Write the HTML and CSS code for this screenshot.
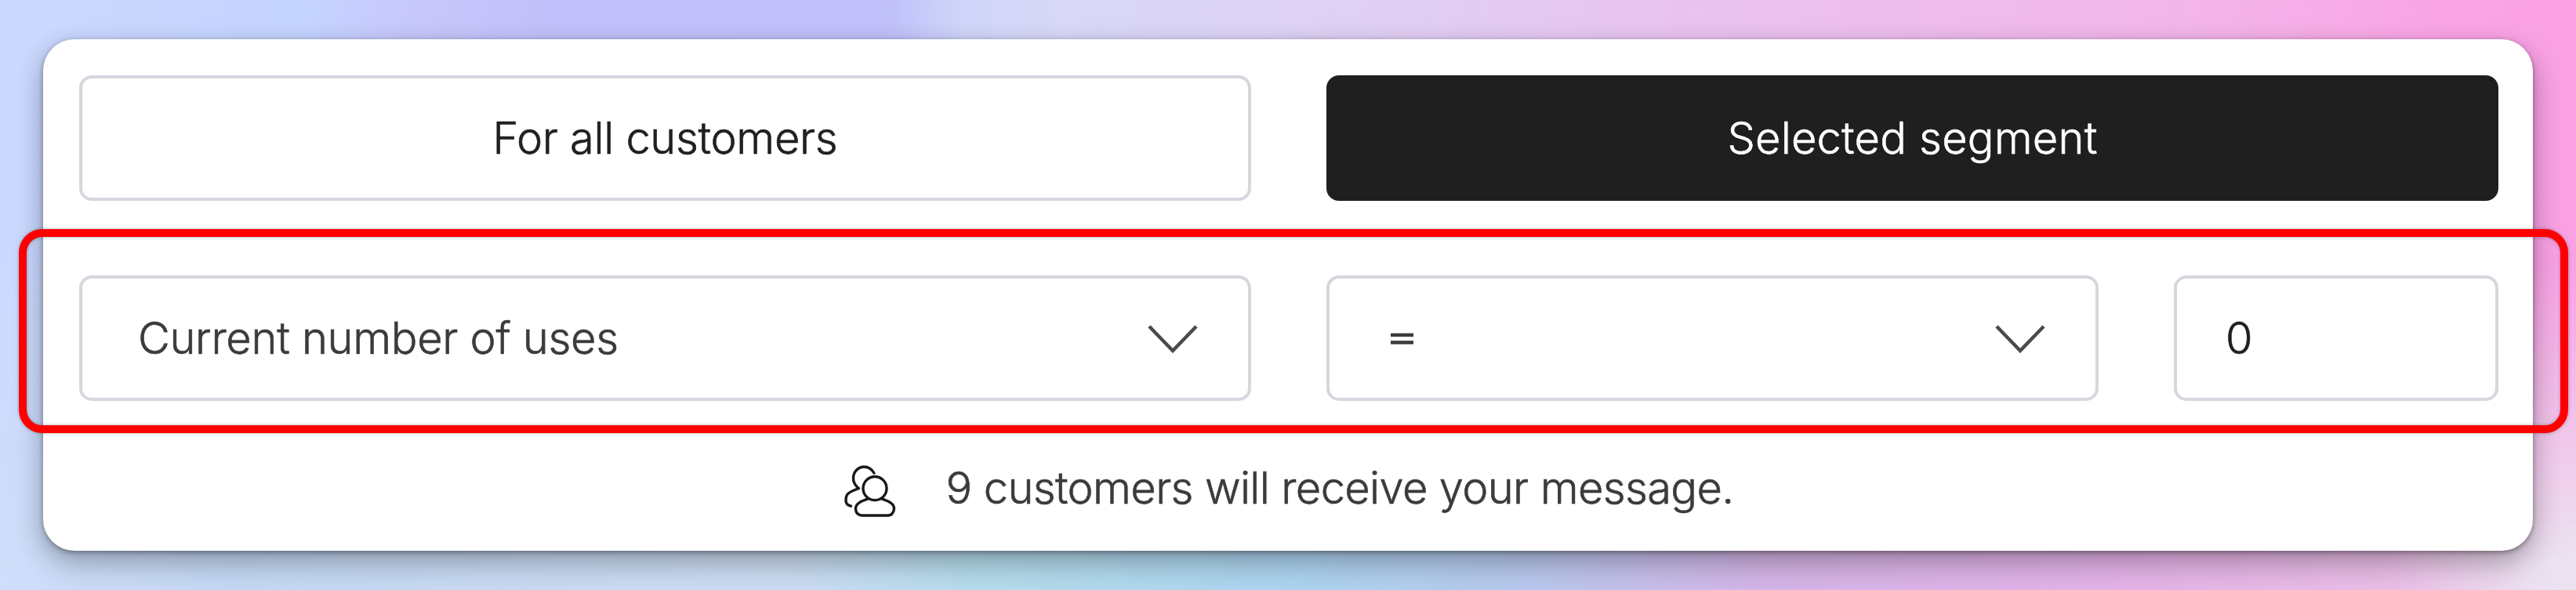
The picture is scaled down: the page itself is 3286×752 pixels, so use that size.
FILE: index.html
```html
<!DOCTYPE html>
<html lang="en">
<head>
<meta charset="utf-8">
<title>Customer segment</title>
<link rel="stylesheet" href="styles.css">
</head>
<body>
<main class="card">
  <div class="tabs">
    <button class="tab"><span class="t-all">For all customers</span></button>
    <button class="tab tab-active"><span class="t-seg">Selected segment</span></button>
  </div>
  <div class="filters">
    <div class="field">
      <span class="t-uses">Current number of uses</span>
      <svg class="chevron" viewBox="0 0 64 36"><path d="M2 2 32 33 62 2"/></svg>
    </div>
    <div class="field field-operator">
      <svg class="equals" viewBox="0 0 29 15"><path d="M0 3H29M0 12.5H29"/></svg>
      <svg class="chevron" viewBox="0 0 64 36"><path d="M2 2 32 33 62 2"/></svg>
    </div>
    <div class="field field-value"><span>0</span></div>
    <div class="highlight"></div>
  </div>
  <div class="summary">
    <svg class="people" viewBox="0 0 66 66">
      <path d="M38 10C35 5 31 2 25.500 2C17 2 11.500 9 11.500 16.500C11.500 22 14 26 18.500 29.500C13 31.500 8 33.500 5 36C2 38.500 2 42 2 45C2 48.500 4 51 8.500 52"/>
      <circle cx="39" cy="29.500" r="15"/>
      <path d="M31 42.500C25 45 14.500 47.500 14.500 55C14.500 61 18 64 23 64H56C60 64 63.500 60 63.500 55C63.500 47.500 53 45 47 42.500"/>
    </svg>
    <span class="t-msg">9 customers will receive your message.</span>
  </div>
</main>
</body>
</html>
```
FILE: styles.css
```css
* { box-sizing: border-box; }
body {
  margin: 0;
  width: 3286px;
  height: 752px;
  padding: 50px 55px 50px 55px;
  overflow: hidden;
  font-family: Inter, sans-serif;
  font-weight: 300;
  font-size: 56px;
  line-height: 68px;
  color: #3b3b3b;
  -webkit-text-stroke: .6px currentColor;
  background:
    linear-gradient(90deg, #cfdefa 0, #c4d8f4 300px, #ccdcf2 1000px, #b4dcec 1250px, #acd4f0 1650px, #b8c8ee 1950px, #d4b4e6 2250px, #e4b2e8 2700px, #eabde6 3050px, #ece0f0 3230px, #ece3f1 3286px);
}
body::before {
  content: "";
  position: absolute;
  inset: 0;
  z-index: -1;
  background: linear-gradient(90deg, #ccd9ff 0, #c4d3ff 400px, #c7c8fb 520px, #c2c0fb 700px, #c0c0fb 1130px, #d0d6fa 1230px, #d8d8f8 1350px, #e0d0f4 1750px, #eac2ef 2180px, #f3b5ea 2800px, #faa5e6 3100px, #faa0e4 3286px);
  -webkit-mask-image: linear-gradient(#000 45%, transparent 95%);
  mask-image: linear-gradient(#000 45%, transparent 95%);
}
.card {
  height: 652px;
  padding: 46px 44px 0 46px;
  border-radius: 40px;
  background: #fff;
  box-shadow: 0 14px 36px rgba(0, 0, 0, .32), 0 2px 6px rgba(0, 0, 0, .35);
}
.tabs { display: grid; grid-template-columns: 1fr 1fr; gap: 96px; }
.tab, .field {
  height: 160px;
  border: 4px solid #d6d6df;
  border-radius: 16px;
  background: #fff;
}
.tab { padding: 0; font: inherit; color: #202020; }
.tab-active { border-color: #1f1f1f; background: #1f1f1f; color: #fff; }
.t-all { letter-spacing: -.33px; }
.t-seg { letter-spacing: .2px; }
.t-uses { letter-spacing: -.32px; }
.t-msg { letter-spacing: -.65px; margin-top: -8px; }
.filters {
  position: relative;
  display: grid;
  grid-template-columns: 1495px 985px 1fr;
  gap: 96px;
  margin-top: 95px;
}
.field {
  display: flex;
  align-items: center;
  justify-content: space-between;
  padding: 0 64px 0 71px;
}
.field-operator { padding-left: 78px; }
.field-value { padding-left: 62px; color: #202020; }
.highlight {
  position: absolute;
  inset: -59px -89px -41px -77px;
  border: 10px solid #f00;
  border-radius: 30px;
  filter: drop-shadow(0 0 2px rgba(0, 40, 40, .35));
}
.chevron { width: 64px; height: 36px; margin-top: 2px; fill: none; stroke: #4a4a4a; stroke-width: 4.500; }
.equals { width: 29px; height: 15px; stroke: #3b3b3b; stroke-width: 4.500; }
.summary { display: flex; justify-content: center; align-items: center; gap: 64px; height: 68px; margin-top: 81px; }
.people { width: 66px; height: 66px; fill: none; stroke: #181818; stroke-width: 3.400; stroke-linecap: round; stroke-linejoin: round; }
```
